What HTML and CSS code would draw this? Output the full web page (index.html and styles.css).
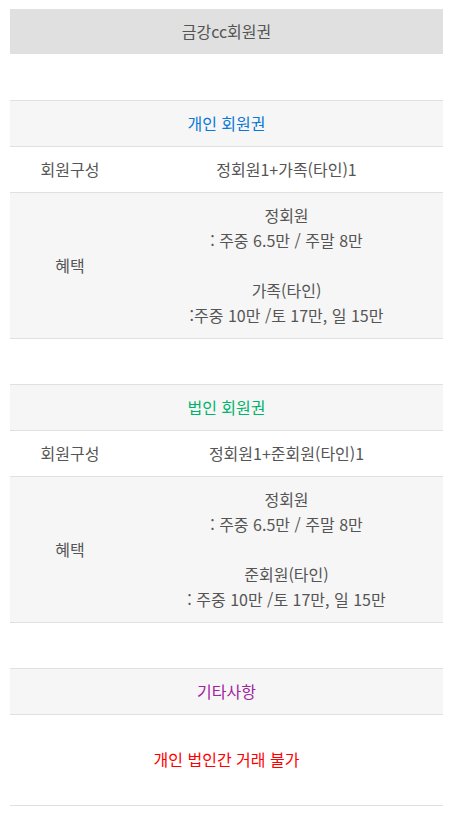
FILE: index.html
```html
<!DOCTYPE html>
<html lang="ko">
<head>
    <meta charset="UTF-8">
    <meta name="viewport" content="width=device-width, initial-scale=1.0">
    <title>금강cc회원권</title>
    <link rel="stylesheet" href="styles.css">
</head>
<body>
    <!-- 제목 -->
    <div class="page-title">금강cc회원권</div>

    <!-- 개인 회원권 -->
    <table class="info-table">
        <colgroup>
            <col class="col-label">
            <col>
        </colgroup>
        <tr class="head-row">
            <th colspan="2" class="text-blue">개인 회원권</th>
        </tr>
        <tr>
            <td>회원구성</td>
            <td>정회원1+가족(타인)1</td>
        </tr>
        <tr class="shade-row">
            <td>혜택</td>
            <td>
                정회원<br>
                : 주중 6.5만 / 주말 8만<br>
                <br>
                가족(타인)<br>
                :주중 10만 /토 17만, 일 15만
            </td>
        </tr>
    </table>

    <!-- 법인 회원권 -->
    <table class="info-table">
        <colgroup>
            <col class="col-label">
            <col>
        </colgroup>
        <tr class="head-row">
            <th colspan="2" class="text-green">법인 회원권</th>
        </tr>
        <tr>
            <td>회원구성</td>
            <td>정회원1+준회원(타인)1</td>
        </tr>
        <tr class="shade-row">
            <td>혜택</td>
            <td>
                정회원<br>
                : 주중 6.5만 / 주말 8만<br>
                <br>
                준회원(타인)<br>
                : 주중 10만 /토 17만, 일 15만
            </td>
        </tr>
    </table>

    <!-- 기타사항 -->
    <table class="info-table">
        <tr class="head-row">
            <th class="text-purple">기타사항</th>
        </tr>
        <tr>
            <td class="note-cell">개인 법인간 거래 불가</td>
        </tr>
    </table>
</body>
</html>
```

FILE: styles.css
```css
/* 기본 설정 */
* {
    margin: 0;
    padding: 0;
    box-sizing: border-box;
}

body {
    padding: 9px 10px;
    background: #ffffff;
    color: #555555;
    font-family: 'Noto Sans CJK KR', 'Noto Sans', sans-serif;
    font-size: 16px;
    line-height: 25px;
}

/* 상단 제목 */
.page-title {
    background: #e0e0e0;
    text-align: center;
    padding: 10px 0;
    height: 45px;
}

/* 정보 테이블 */
.info-table {
    width: 100%;
    border-collapse: collapse;
    margin-top: 46px;
    table-layout: fixed;
}

.info-table + .info-table {
    margin-top: 45px;
}

.col-label {
    width: 120px;
}

.info-table th,
.info-table td {
    border-top: 1px solid #e0e0e0;
    border-bottom: 1px solid #e0e0e0;
    text-align: center;
    vertical-align: middle;
    font-weight: normal;
    padding: 10px 0;
}

.head-row th,
.shade-row td {
    background: #f6f6f6;
}

.note-cell {
    padding: 32px 0 33px !important;
    color: #ff0000;
}

/* 글자 색상 */
.text-blue {
    color: #0a78d6;
}

.text-green {
    color: #00b36b;
}

.text-purple {
    color: #a0249e;
}
```
